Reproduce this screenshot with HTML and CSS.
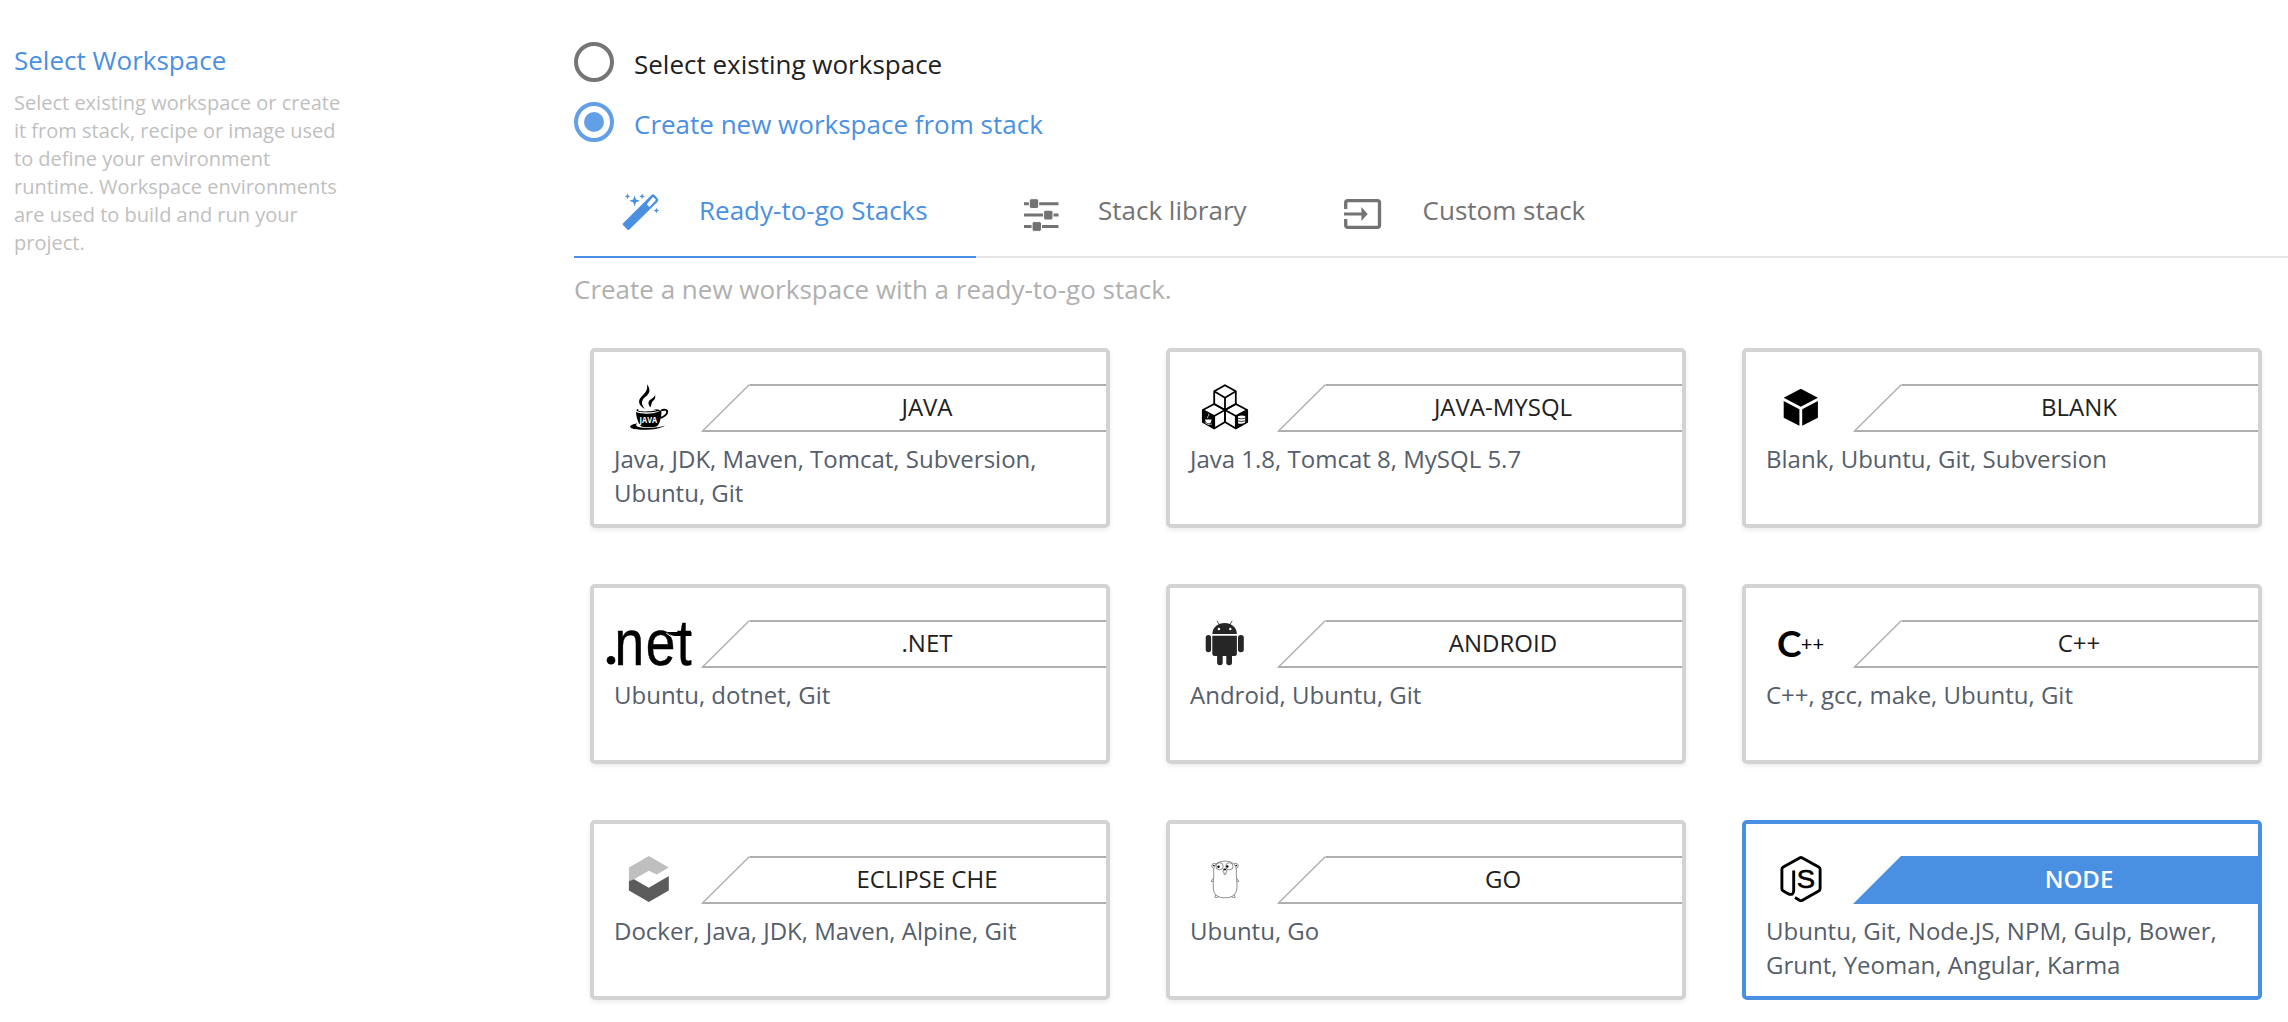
FILE: index.html
```html
<!DOCTYPE html>
<html lang="en">
<head>
<meta charset="utf-8">
<title>Select Workspace</title>
<link rel="stylesheet" href="styles.css">
</head>
<body>
<div class="page">
  <aside class="side">
    <h2 class="side-title">Select Workspace</h2>
    <p class="side-text">Select existing workspace or create it from stack, recipe or image used to define your environment runtime. Workspace environments are used to build and run your project.</p>
  </aside>
  <main class="main">
    <div class="radios">
      <div class="radio"><span class="ring"></span><span class="radio-label">Select existing workspace</span></div>
      <div class="radio radio-on"><span class="ring"></span><span class="radio-label">Create new workspace from stack</span></div>
    </div>
    <nav class="tabs">
      <div class="tab tab-active">
        <svg class="tab-icon" width="41" height="42" viewBox="0 0 41 42">
          <g transform="translate(-2 0)" fill="currentColor">
            <path fill-rule="evenodd" d="M2.9 31.6L31.5 3.1Q33 1.6 34.5 3.1L37.6 6.6Q39 8.2 37.6 9.7L9.4 37.6Q8.5 38.6 7.4 37.4L3 33Q2.2 32.3 2.9 31.6ZM26.8 12.2L29.4 14.9L35.5 8.6Q36.1 8 35.5 7.3L33.8 5.6Q33.1 5 32.5 5.6Z"/>
            <path d="M14.6 3.4L16 7.4L20 8.8L16 10.2L14.6 14.4L13.2 10.2L9.2 8.8L13.2 7.4Z"/>
            <path d="M7.5 1.6L8.3 3.6L10.3 4.4L8.3 5.2L7.5 7.2L6.7 5.2L4.7 4.4L6.7 3.6Z"/>
            <path d="M22.1 1.6L22.9 3.6L24.9 4.4L22.9 5.2L22.1 7.2L21.3 5.2L19.3 4.4L21.3 3.6Z"/>
            <path d="M36.4 15.8L37.2 17.8L39.2 18.6L37.2 19.4L36.4 21.4L35.6 19.4L33.6 18.6L35.6 17.8Z"/>
          </g>
        </svg>
        <span class="tab-label">Ready-to-go Stacks</span>
      </div>
      <div class="tab">
        <svg class="tab-icon" width="38" height="42" viewBox="0 0 38 42" fill="currentColor">
          <path d="M0 10.2H34.5V13.2H0ZM0 21.6H34.5V24.6H0ZM0 33H34.5V36H0Z"/>
          <g stroke="#fff" stroke-width="1">
            <rect x="5.3" y="6.7" width="9.4" height="9.8" rx="2"/>
            <rect x="19.6" y="18.2" width="9.4" height="9.8" rx="2"/>
            <rect x="8.1" y="29.6" width="9.4" height="9.8" rx="2"/>
          </g>
        </svg>
        <span class="tab-label">Stack library</span>
      </div>
      <div class="tab tab-last">
        <svg class="tab-icon" width="43" height="42" viewBox="0 0 43 42">
          <path d="M1.7 17V10.7Q1.7 8.6 3.8 8.6H33.4Q35.5 8.6 35.5 10.7V33.2Q35.5 35.3 33.4 35.3H3.8Q1.7 35.3 1.7 33.2V27" fill="none" stroke="currentColor" stroke-width="3.3"/>
          <path d="M0 20.4H17.4V15L23.7 22L17.4 29V23.6H0Z" fill="currentColor"/>
        </svg>
        <span class="tab-label">Custom stack</span>
      </div>
    </nav>
    <p class="intro">Create a new workspace with a ready-to-go stack.</p>

    <svg width="0" height="0" class="defs">
      <symbol id="slant" viewBox="0 0 49 48">
        <path d="M48.5 .5L1.5 47" fill="none" stroke="#afafaf" stroke-width="1.4"/>
        <path d="M0 48L2 46H49V48Z" fill="#afafaf"/>
      </symbol>
    </svg>

    <div class="cards">
      <section class="card">
        <div class="head">
          <svg class="logo" width="107" height="48" viewBox="0 0 107 48">
            <path d="M52.800 0C57 5.500 56 9.500 51.200 13C47 16.500 47 20.500 51 25C44 21 43.500 16.500 48 12C52.500 7.500 54 5 52.800 0Z"/>
            <path d="M60.900 10.300C62 14.500 60.500 15.500 58.500 17.500C57 19 57.800 20.500 56.400 23.500C53.500 19.500 54 17 57.400 15C60 13.400 61 12.500 60.900 10.300Z"/>
            <path d="M45.500 24.600C41.500 25.600 41.500 27 45 27.700C50 28.700 60 28.600 66.500 26.500C60 30.600 48 30.400 41.900 28C42.500 34 44.500 40 47 42.300C50 43.600 60 43.600 63 42.300C65.500 40 67 35 67.500 28.500C68 25.500 63 25 58 25.200C62 25.700 63.500 26 61 26.600C55 27.800 48 27.600 45.500 27C43 26.300 44 25.300 45.500 24.600Z"/>
            <path d="M67 26.500C71 24.800 74 26 73 29C72 31.800 69 33 66.500 34" fill="none" stroke="#000" stroke-width="1.900"/>
            <path d="M43.500 39.300C37.500 40.300 34 42.300 37.500 44.300C43 46.600 66 46.800 71 41.300C64 44.800 46 44.600 43 42.300C41.500 41.300 42 40.300 43.500 39.300Z"/>
            <text x="45.600" y="38.600" class="cup-text" textLength="17.600" lengthAdjust="spacingAndGlyphs">JAVA</text>
          </svg>
          <svg class="slant" width="49" height="48"><use href="#slant"/></svg>
          <div class="title">JAVA</div>
        </div>
        <p class="desc">Java, JDK, Maven, Tomcat, Subversion, Ubuntu, Git</p>
      </section>

      <section class="card">
        <div class="head">
          <svg class="logo" width="107" height="48" viewBox="0 0 107 48">
            <g fill="none" stroke="#000" stroke-width="1.800" stroke-linejoin="round">
              <path d="M55 1.200L65.800 7.300V20L55 26L44.200 20V7.300ZM44.200 7.300L55 13.800L65.800 7.300M55 13.800V26"/>
              <path d="M44.200 20L55 26V38L44.200 44.500L32.800 38V26ZM32.800 26L44.200 32L55 26M44.200 32V44.500"/>
              <path d="M65.800 20L77.200 26V38L65.800 44.500L55 38V26ZM55 26L65.800 32L77.200 26M65.800 32V44.500"/>
            </g>
            <path d="M32.800 26L44.200 32V44.500L32.800 38ZM77.200 26L65.800 32V44.500L77.200 38Z"/>
            <path d="M35 35.500H41.500Q41.500 39.500 38.500 39.500Q35.500 39 35 35.500Z" fill="#fff"/>
            <path d="M38.500 29.800Q39.500 31.300 38 32.300Q37 33.300 38 34.300M34.800 38.500Q38 41.800 42 40" fill="none" stroke="#fff" stroke-width=".7"/>
            <path d="M68 32.300Q71.500 30.800 75.200 32V38.500Q71.500 40.500 68 39.200Z" fill="#fff"/>
            <path d="M68 34.300Q71.500 35.600 75.200 34.100M68 37Q71.500 38.200 75.200 36.700" fill="none" stroke="#000" stroke-width=".8"/>
          </svg>
          <svg class="slant" width="49" height="48"><use href="#slant"/></svg>
          <div class="title">JAVA-MYSQL</div>
        </div>
        <p class="desc">Java 1.8, Tomcat 8, MySQL 5.7</p>
      </section>

      <section class="card">
        <div class="head">
          <svg class="logo" width="107" height="48" viewBox="0 0 107 48">
            <path d="M54.800 4.700L71.900 13.700L54.800 22.700L37.700 13.700ZM37.700 17L53.400 25.200V41.800L37.700 33.700ZM71.900 17L56.200 25.200V41.800L71.900 33.700Z"/>
          </svg>
          <svg class="slant" width="49" height="48"><use href="#slant"/></svg>
          <div class="title">BLANK</div>
        </div>
        <p class="desc">Blank, Ubuntu, Git, Subversion</p>
      </section>

      <section class="card">
        <div class="head">
          <svg class="logo" width="107" height="48" viewBox="0 0 107 48">
            <circle cx="17" cy="40.200" r="4.300"/>
            <g transform="scale(.82 1)"><text y="44.800" x="24.900 63.200 100.800" class="net-text">net</text></g>
            <path d="M73 12H97.500V16H80Q76 15 73 12Z"/>
            <path d="M72.300 13.200L78 17.200" stroke="#fff" stroke-width="1"/>
          </svg>
          <svg class="slant" width="49" height="48"><use href="#slant"/></svg>
          <div class="title">.NET</div>
        </div>
        <p class="desc">Ubuntu, dotnet, Git</p>
      </section>

      <section class="card">
        <div class="head">
          <svg class="logo" width="107" height="48" viewBox="0 0 107 48" fill="#262626">
            <path d="M42.300 14C42.500 7 48 3 54.600 3S66.700 7 66.900 14Z"/>
            <path d="M47 .8L49.800 5.500M62.200 .8L59.400 5.500" stroke="#262626" stroke-width=".8"/>
            <circle cx="48.900" cy="9" r="1.200" fill="#fff"/><circle cx="60.300" cy="9" r="1.200" fill="#fff"/>
            <path d="M42.300 15.700H66.900V33.500Q66.900 36 64.400 36H44.800Q42.300 36 42.300 33.500Z"/>
            <rect x="35.700" y="15" width="5.400" height="17.200" rx="2.700"/>
            <rect x="68" y="15" width="5.800" height="17.200" rx="2.700"/>
            <rect x="47.100" y="30" width="5.600" height="15.200" rx="2.700"/>
            <rect x="56.300" y="30" width="5.700" height="15.200" rx="2.700"/>
          </svg>
          <svg class="slant" width="49" height="48"><use href="#slant"/></svg>
          <div class="title">ANDROID</div>
        </div>
        <p class="desc">Android, Ubuntu, Git</p>
      </section>

      <section class="card">
        <div class="head">
          <svg class="logo" width="107" height="48" viewBox="0 0 107 48">
            <text x="31" y="36.600" class="c-text">C</text>
            <text x="54.800" y="30.800" class="plus-text">++</text>
          </svg>
          <svg class="slant" width="49" height="48"><use href="#slant"/></svg>
          <div class="title">C++</div>
        </div>
        <p class="desc">C++, gcc, make, Ubuntu, Git</p>
      </section>

      <section class="card">
        <div class="head">
          <svg class="logo" width="107" height="48" viewBox="0 0 107 48">
            <path d="M54.800 0L74.800 11.400L62.800 18.400L54.800 14.700L40 23.300L34.900 25.700V11.400Z" fill="#bfbfbf"/>
            <path d="M34.900 25.300L40 23.300L54.800 31.700L74.800 20V34.400L54.800 46L34.900 34.400Z" fill="#5c5c5c"/>
          </svg>
          <svg class="slant" width="49" height="48"><use href="#slant"/></svg>
          <div class="title">ECLIPSE CHE</div>
        </div>
        <p class="desc">Docker, Java, JDK, Maven, Alpine, Git</p>
      </section>

      <section class="card">
        <div class="head">
          <svg class="logo" width="107" height="48" viewBox="0 0 107 48">
            <g fill="none" stroke="#444" stroke-width=".6">
              <path d="M43.600 14C44 8 48 5.200 55 5.200S66 8 66.400 14C66 20 67.200 24 66.900 32C66.500 39 62 41.800 55 41.800S43.500 39 43.300 32C43 24 44.200 20 43.600 14Z"/>
              <circle cx="49.600" cy="10.300" r="3.600"/><circle cx="59.400" cy="10.300" r="3.600"/>
              <path d="M43.500 12.500Q41 11.500 42 8.500Q43.500 6.200 46 8M66.300 12.500Q69 11.500 68 8.500Q66.500 6.200 64 8"/>
              <path d="M43.300 22.500Q41.300 24 41.500 25.500Q42.300 26.200 43.300 25M66.700 22.500Q68.700 24 68.500 25.500Q67.700 26.200 66.700 25"/>
              <path d="M46 38.500Q44.500 40 45.200 41.500Q47 42 48.500 40.500M64 38.500Q65.500 40 64.800 41.500Q63 42 61.500 40.500M53.500 14Q52 16 54 16.300V18.300H56V16.300Q58 16 56.500 14"/>
            </g>
            <circle cx="48.500" cy="10.700" r="1.200"/><circle cx="57.300" cy="10.500" r="1.200"/>
            <ellipse cx="54.800" cy="13.400" rx="1.500" ry=".9"/>
            <circle cx="43.800" cy="9.500" r=".8"/><circle cx="66.300" cy="9.500" r=".8"/>
          </svg>
          <svg class="slant" width="49" height="48"><use href="#slant"/></svg>
          <div class="title">GO</div>
        </div>
        <p class="desc">Ubuntu, Go</p>
      </section>

      <section class="card card-on">
        <div class="head">
          <svg class="logo" width="107" height="48" viewBox="0 0 107 48">
            <path d="M47.700 14.600V34.500Q47.700 39.600 42.500 38L37.300 35Q35.900 34.200 35.900 32.700V13.300Q35.900 11.800 37.300 11L53.500 1.900Q55 1.100 56.400 1.900L72.700 11Q74.100 11.800 74.100 13.300V32.700Q74.100 34.200 72.700 35L56.400 44.200Q55 45 53.500 44.200L49 41.500" fill="none" stroke="#000" stroke-width="2.900"/>
            <text x="50.800" y="32.400" class="js-text" textLength="18.300" lengthAdjust="spacingAndGlyphs">S</text>
          </svg>
          <svg class="slant" width="49" height="48" viewBox="0 0 49 48"><path d="M0 48L48 0H49V48Z" fill="#4a90e2"/></svg>
          <div class="title">NODE</div>
        </div>
        <p class="desc">Ubuntu, Git, Node.JS, NPM, Gulp, Bower, Grunt, Yeoman, Angular, Karma</p>
      </section>
    </div>
  </main>
</div>
</body>
</html>
```
FILE: styles.css
```css
* { box-sizing: border-box; }
body { margin: 0; background: #fff; font-family: "Open Sans", sans-serif; color: #212121; }
h2, p { margin: 0; font-weight: 400; }
svg { display: block; flex: none; }

.page { display: flex; height: 1022px; overflow: hidden; }
.side { width: 574px; flex: none; padding: 42px 0 0 14px; }
.side-title { font-size: 26px; line-height: 36px; color: #4a90e2; }
.side-text { width: 336px; margin-top: 11px; font-size: 20px; line-height: 28px; color: #bfbfbf; }
.main { flex: 1; min-width: 0; padding-top: 42px; }

.radios { display: flex; flex-direction: column; gap: 20px; }
.radio { display: flex; height: 40px; gap: 20px; font-size: 26px; }
.radio-label { line-height: 40px; padding-top: 2px; }
.ring { width: 40px; height: 40px; border: 4px solid #757575; border-radius: 50%; display: grid; place-items: center; }
.radio-on { color: #4a90e2; }
.radio-on .ring { border-color: #639fe6; }
.radio-on .ring::after { content: ""; width: 20px; height: 20px; border-radius: 50%; background: #639fe6; }

.tabs { display: flex; margin-top: 26px; height: 90px; box-shadow: inset 0 -2px #e3e3e3; }
.tab { display: flex; padding: 0 48px; color: #737373; }
.tab-active { width: 402px; color: #4a90e2; border-bottom: 2px solid #4a90e2; }
.tab-last { padding-left: 49px; }
.tab-icon { margin: 24px 36px 0 0; }
.tab-label { font-size: 26px; line-height: 84px; white-space: nowrap; }
.intro { margin-top: 13px; font-size: 26px; line-height: 36px; color: #b0b0b0; }
.defs { height: 0; }

.cards { display: grid; grid-template-columns: repeat(3, 520px); grid-auto-rows: 180px; gap: 56px; margin: 41px 0 0 16px; }
.card { border: 4px solid #d3d3d3; border-radius: 5px; padding-top: 32px; box-shadow: 0 2px 4px rgba(0, 0, 0, .08); }
.head { display: flex; height: 48px; }
.logo { overflow: visible; }
.title { flex: 1; border: solid #afafaf; border-width: 2px 0; padding-right: 2px; font-size: 24px; line-height: 42px; text-align: center; }
.desc { padding: 10px 16px 0 20px; font-size: 24px; line-height: 34px; color: #555e6a; }
.card-on { border-color: #4a90e2; box-shadow: none; }
.card-on .title { background: #4a90e2; border-color: #4a90e2; color: #fff; font-weight: 600; }

.cup-text { font: bold 8px "Open Sans", sans-serif; fill: #fff; }
.net-text { font: 65px "Liberation Sans", sans-serif; stroke: #000; stroke-width: .5; }
.c-text { font: bold 37px Lato, sans-serif; }
.plus-text { font: 20px Lato, sans-serif; }
.js-text { font: 25px "Liberation Sans", sans-serif; stroke: #000; stroke-width: .6; }
```
